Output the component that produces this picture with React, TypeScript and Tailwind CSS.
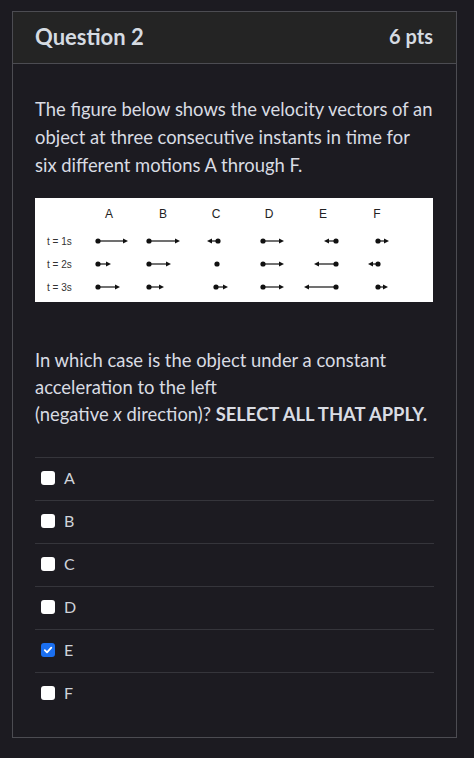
import React from "react";

type Arrow = { x: number; to?: number };

const rows: { label: string; y: number; arrows: Arrow[] }[] = [
  {
    label: "t = 1s",
    y: 43,
    arrows: [
      { x: 63, to: 93 },
      { x: 114, to: 145 },
      { x: 183, to: 172 },
      { x: 228, to: 249 },
      { x: 301, to: 289 },
      { x: 343, to: 354 },
    ],
  },
  {
    label: "t = 2s",
    y: 66,
    arrows: [
      { x: 63, to: 76 },
      { x: 114, to: 136 },
      { x: 182 },
      { x: 228, to: 249 },
      { x: 301, to: 279 },
      { x: 343, to: 333 },
    ],
  },
  {
    label: "t = 3s",
    y: 89,
    arrows: [
      { x: 63, to: 85 },
      { x: 114, to: 129 },
      { x: 181, to: 193 },
      { x: 228, to: 249 },
      { x: 301, to: 269 },
      { x: 343, to: 353 },
    ],
  },
];

const cols = [
  { l: "A", x: 74 },
  { l: "B", x: 128 },
  { l: "C", x: 181 },
  { l: "D", x: 234 },
  { l: "E", x: 288 },
  { l: "F", x: 342 },
];

function Vector({ x, y, to }: { x: number; y: number; to?: number }) {
  if (to === undefined) return <circle cx={x} cy={y} r={2.6} fill="#111" />;
  const dir = to > x ? 1 : -1;
  const base = to - dir * 5;
  return (
    <g>
      <line x1={x} y1={y} x2={base} y2={y} stroke="#111" strokeWidth={1.2} />
      <polygon points={`${to},${y} ${base},${y - 2.6} ${base},${y + 2.6}`} fill="#111" />
      <circle cx={x} cy={y} r={2.6} fill="#111" />
    </g>
  );
}

function Figure() {
  return (
    <div className="mt-[19px] h-[104px] w-[398px] bg-white">
      <svg width="398" height="104" viewBox="0 0 398 104" style={{ fontFamily: "'Liberation Sans', Arial, sans-serif" }}>
        {cols.map((c) => (
          <text key={c.l} x={c.x} y={19.5} textAnchor="middle" fontSize="12" fill="#222">
            {c.l}
          </text>
        ))}
        {rows.map((r) => (
          <g key={r.label}>
            <text x={12} y={r.y + 3.5} fontSize="10" fill="#333">
              {r.label}
            </text>
            {r.arrows.map((a, i) => (
              <Vector key={i} x={a.x} y={r.y} to={a.to} />
            ))}
          </g>
        ))}
      </svg>
    </div>
  );
}

const options = ["A", "B", "C", "D", "E", "F"];

export default function App() {
  return (
    <div
      className="min-h-[758px] w-[474px] bg-[#1c1b21] pt-[11px] text-[#d9dce3]"
      style={{ fontFamily: "Lato, 'Open Sans', sans-serif" }}
    >
      <div className="ml-[12px] w-[445px] border border-[#4c4c52]">
        {/* Header */}
        <div className="flex h-[52px] items-center justify-between border-b border-[#4c4c52] bg-[#242424] pb-[3px] pl-[22px] pr-[23px]">
          <span className="text-[22px] font-bold text-[#d5dbe2]">Question 2</span>
          <span className="text-[20px] font-bold text-[#d5dbe2]">6 pts</span>
        </div>

        {/* Body */}
        <div className="px-[22px] pt-[31px] pb-[22px]">
          <p className="text-[18.4px] leading-[28px]">
            The figure below shows the velocity vectors of an object at three consecutive instants in
            time for six different motions A through F.
          </p>

          <Figure />

          <p className="mt-[45px] text-[18.4px] leading-[27px]">
            In which case is the object under a constant acceleration to the left
            <br />
            (negative <i>x</i> direction)? <b>SELECT ALL THAT APPLY.</b>
          </p>

          <div className="mt-[29px]">
            {options.map((o) => {
              const checked = o === "E";
              return (
                <div
                  key={o}
                  className="flex h-[43px] items-center gap-[9px] border-t border-[#35353b] pb-[3px] pl-[6px]"
                >
                  {checked ? (
                    <span className="flex h-[14px] w-[14px] items-center justify-center rounded-[3px] bg-[#1a6ff0]">
                      <svg width="10" height="10" viewBox="0 0 10 10">
                        <path
                          d="M1.8 5.2 L4 7.4 L8.3 2.6"
                          fill="none"
                          stroke="white"
                          strokeWidth="1.8"
                          strokeLinecap="round"
                          strokeLinejoin="round"
                        />
                      </svg>
                    </span>
                  ) : (
                    <span className="h-[14px] w-[14px] rounded-[3px] bg-white" />
                  )}
                  <span className="text-[16px] text-[#cfd3da]">{o}</span>
                </div>
              );
            })}
          </div>
        </div>
      </div>
    </div>
  );
}
